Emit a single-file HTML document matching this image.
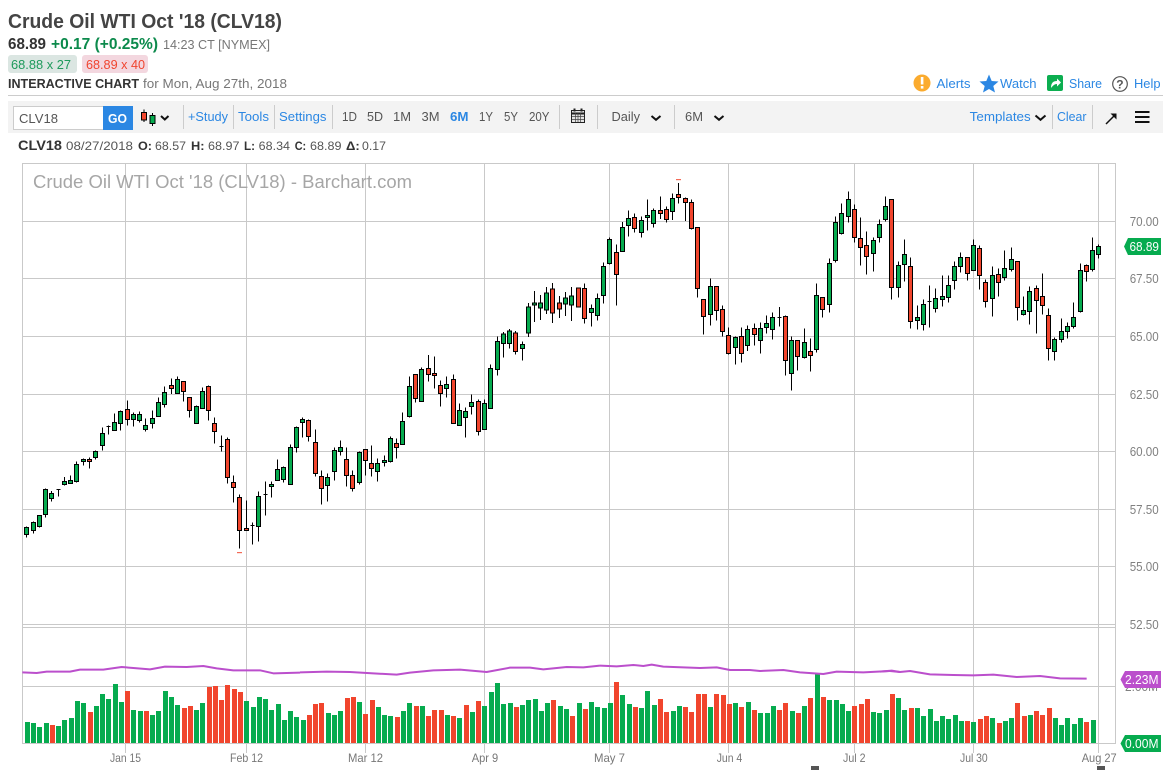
<!DOCTYPE html>
<html><head><meta charset="utf-8"><title>Crude Oil WTI Oct '18 (CLV18)</title>
<style>
html,body{margin:0;padding:0;background:#fff;width:1172px;height:770px;overflow:hidden}
svg{display:block}
text{font-family:"Liberation Sans",sans-serif;font-size:13px;white-space:pre}
.b{font-weight:bold}
.bl{fill:#2b87e3}
.g7{fill:#777}
.d5{fill:#555}
.ax{fill:#808080;font-size:13px}
.dt{fill:#777;font-size:12px}
.w{fill:none;stroke:#000;stroke-width:3}
.gb{fill:#06ab4f;stroke:#000;stroke-width:3}
.rb{fill:#f1452d;stroke:#000;stroke-width:3}
.vg{fill:none;stroke:#06ab4f;stroke-width:15}
.vr{fill:none;stroke:#f1452d;stroke-width:15}
.pl{fill:none;stroke:#bb4fcc;stroke-width:6;stroke-linejoin:round}
</style></head><body>
<svg xmlns="http://www.w3.org/2000/svg" width="1172" height="770" viewBox="0 0 1172 770">
<rect width="1172" height="770" fill="#fff"/>
<!-- Header -->
<text x="8" y="28" class="b" style="font-size:20px" fill="#444" textLength="274" lengthAdjust="spacingAndGlyphs">Crude Oil WTI Oct '18 (CLV18)</text>
<text x="8" y="49" class="b" style="font-size:16px" fill="#333" textLength="38" lengthAdjust="spacingAndGlyphs">68.89</text>
<text x="51" y="49" class="b" style="font-size:16px" fill="#0c8a4c" textLength="107" lengthAdjust="spacingAndGlyphs">+0.17 (+0.25%)</text>
<text x="163" y="49" class="g7" textLength="107" lengthAdjust="spacingAndGlyphs">14:23 CT [NYMEX]</text>
<rect x="8" y="55" width="69" height="18" rx="3" fill="#dbe6e2"/>
<text x="11" y="69" fill="#1f9a5c" textLength="60" lengthAdjust="spacingAndGlyphs">68.88 x 27</text>
<rect x="82" y="55" width="66" height="18" rx="3" fill="#f3d7df"/>
<text x="86" y="69" fill="#f0452f" textLength="59" lengthAdjust="spacingAndGlyphs">68.89 x 40</text>
<text x="8" y="88" class="b" fill="#333" textLength="131" lengthAdjust="spacingAndGlyphs">INTERACTIVE CHART</text>
<text x="143" y="88" class="g7" textLength="144" lengthAdjust="spacingAndGlyphs">for Mon, Aug 27th, 2018</text>
<!-- Top right actions -->
<circle cx="922" cy="83" r="8.5" fill="#fbab2e"/><rect x="920.8" y="77" width="2.6" height="7.5" fill="#fff"/><rect x="920.8" y="86" width="2.6" height="2.6" fill="#fff"/>
<text x="936.5" y="88" class="bl" textLength="34" lengthAdjust="spacingAndGlyphs">Alerts</text>
<path d="M989 74.500L991.700 81L998.500 81.500L993.300 86L995 92.500L989 89L983 92.500L984.700 86L979.500 81.500L986.300 81z" fill="#2b87e3"/>
<text x="1000" y="88" class="bl" textLength="36.500" lengthAdjust="spacingAndGlyphs">Watch</text>
<rect x="1047" y="75" width="16" height="16" rx="2" fill="#0cae50"/>
<path d="M1051 88C1051 83 1053 81 1057 81V78.500L1061 82.500L1057 86.500V84C1054.500 84 1053 85.500 1051 88z" fill="#fff"/>
<text x="1069" y="88" class="bl" textLength="33" lengthAdjust="spacingAndGlyphs">Share</text>
<circle cx="1120" cy="84" r="7.300" fill="none" stroke="#555" stroke-width="1.200"/>
<text x="1116.300" y="88.500" class="b" fill="#555" style="font-size:12px">?</text>
<text x="1134" y="88" class="bl" textLength="26.500" lengthAdjust="spacingAndGlyphs">Help</text>
<rect x="8" y="95" width="1155" height="1" fill="#ccc"/>
<!-- Toolbar -->
<rect x="8" y="101" width="1155" height="32" fill="#f3f3f3"/>
<rect x="13.500" y="106.500" width="90" height="23" fill="#fff" stroke="#ccc"/>
<text x="19" y="123" class="d5" textLength="39" lengthAdjust="spacingAndGlyphs">CLV18</text>
<rect x="103" y="106" width="30" height="24" fill="#2b87e3"/>
<text x="108" y="123" class="b" fill="#fff" textLength="19" lengthAdjust="spacingAndGlyphs">GO</text>
<path d="M144 109.500V122M152.500 113V126" stroke="#000" fill="none"/>
<rect x="141.500" y="112.500" width="5" height="7.500" fill="#f1452d" stroke="#000"/>
<rect x="150" y="115.500" width="5" height="8" fill="#06ab4f" stroke="#000"/>
<path id="ch" d="M161 116L164.800 119.500L168.500 116" fill="none" stroke="#111" stroke-width="2"/>
<g fill="#ccc"><rect x="183" y="105" width="1" height="24"/><rect x="233" y="105" width="1" height="24"/><rect x="274" y="105" width="1" height="24"/><rect x="332" y="105" width="1" height="24"/><rect x="559" y="105" width="1" height="24"/><rect x="597" y="105" width="1" height="24"/><rect x="674" y="105" width="1" height="24"/><rect x="1052" y="105" width="1" height="24"/><rect x="1092" y="105" width="1" height="24"/></g>
<text x="188" y="121" class="bl" textLength="40" lengthAdjust="spacingAndGlyphs">+Study</text>
<text x="238" y="121" class="bl" textLength="31" lengthAdjust="spacingAndGlyphs">Tools</text>
<text x="279" y="121" class="bl" textLength="47.500" lengthAdjust="spacingAndGlyphs">Settings</text>
<text x="342" y="121" class="d5" textLength="15" lengthAdjust="spacingAndGlyphs">1D</text>
<text x="367" y="121" class="d5" textLength="16" lengthAdjust="spacingAndGlyphs">5D</text>
<text x="393" y="121" class="d5" textLength="18" lengthAdjust="spacingAndGlyphs">1M</text>
<text x="421.500" y="121" class="d5" textLength="18" lengthAdjust="spacingAndGlyphs">3M</text>
<text x="450" y="121" class="b bl" textLength="18.500" lengthAdjust="spacingAndGlyphs">6M</text>
<text x="479" y="121" class="d5" textLength="14" lengthAdjust="spacingAndGlyphs">1Y</text>
<text x="504" y="121" class="d5" textLength="14" lengthAdjust="spacingAndGlyphs">5Y</text>
<text x="529" y="121" class="d5" textLength="20.500" lengthAdjust="spacingAndGlyphs">20Y</text>
<!-- Calendar -->
<rect x="571.500" y="110.500" width="13" height="12" fill="#e4e4e4" stroke="#222"/>
<path d="M572 113.500H584" stroke="#222" stroke-width="2" fill="none"/>
<path d="M575.500 113V122M578 113V122M580.500 113V122M572 116.500H584M572 119.500H584" stroke="#444" stroke-width=".7" fill="none"/>
<path d="M574.500 108.500V111.500M581.500 108.500V111.500" stroke="#222" stroke-width="2" fill="none"/>
<text x="611.500" y="121" class="d5" textLength="28.500" lengthAdjust="spacingAndGlyphs">Daily</text>
<path d="M651.500 116L656 119.800L660.500 116" fill="none" stroke="#111" stroke-width="2"/>
<text x="685" y="121" class="d5" textLength="18" lengthAdjust="spacingAndGlyphs">6M</text>
<path d="M714.500 116L719 119.800L723.500 116" fill="none" stroke="#111" stroke-width="2"/>
<text x="969.700" y="121" class="bl" textLength="61" lengthAdjust="spacingAndGlyphs">Templates</text>
<path d="M1035.500 115.500L1040.500 119.800L1045.500 115.500" fill="none" stroke="#111" stroke-width="2"/>
<text x="1057" y="121" class="bl" textLength="29.500" lengthAdjust="spacingAndGlyphs">Clear</text>
<path d="M1106 124L1115 115" fill="none" stroke="#111" stroke-width="1.500"/><path d="M1110.500 113.500H1116.500V119.500z" fill="#111"/>
<rect x="1135" y="111" width="14.500" height="2" fill="#111"/><rect x="1135" y="116" width="14.500" height="2" fill="#111"/><rect x="1135" y="121" width="14.500" height="2" fill="#111"/>
<!-- Quote row -->
<text x="18" y="150" class="b" fill="#333" style="font-size:14px" textLength="44" lengthAdjust="spacingAndGlyphs">CLV18</text>
<text x="66" y="150" class="d5" style="font-size:12px" textLength="67" lengthAdjust="spacingAndGlyphs">08/27/2018</text>
<g style="font-size:12px" fill="#333">
<text x="138" y="150" class="b" style="font-size:12px" textLength="14" lengthAdjust="spacingAndGlyphs">O:</text>
<text x="155" y="150" style="font-size:12px" fill="#555" textLength="31" lengthAdjust="spacingAndGlyphs">68.57</text>
<text x="191" y="150" class="b" style="font-size:12px" textLength="13.500" lengthAdjust="spacingAndGlyphs">H:</text>
<text x="208" y="150" style="font-size:12px" fill="#555" textLength="31.500" lengthAdjust="spacingAndGlyphs">68.97</text>
<text x="244" y="150" class="b" style="font-size:12px" textLength="11" lengthAdjust="spacingAndGlyphs">L:</text>
<text x="258.700" y="150" style="font-size:12px" fill="#555" textLength="31.300" lengthAdjust="spacingAndGlyphs">68.34</text>
<text x="294.700" y="150" class="b" style="font-size:12px" textLength="11.500" lengthAdjust="spacingAndGlyphs">C:</text>
<text x="310" y="150" style="font-size:12px" fill="#555" textLength="31.500" lengthAdjust="spacingAndGlyphs">68.89</text>
<text x="346" y="150" class="b" style="font-size:12px" textLength="13.700" lengthAdjust="spacingAndGlyphs">Δ:</text>
<text x="362" y="150" style="font-size:12px" fill="#555" textLength="24" lengthAdjust="spacingAndGlyphs">0.17</text>
</g>
<!-- Grid -->
<g shape-rendering="crispEdges" fill="#c9c9c9">
<rect x="22" y="163" width="1094" height="1"/>
<rect x="22" y="221" width="1094" height="1"/><rect x="22" y="278" width="1094" height="1"/><rect x="22" y="336" width="1094" height="1"/><rect x="22" y="394" width="1094" height="1"/><rect x="22" y="451" width="1094" height="1"/><rect x="22" y="509" width="1094" height="1"/><rect x="22" y="566" width="1094" height="1"/><rect x="22" y="624" width="1094" height="1"/><rect x="22" y="627" width="1094" height="1"/><rect x="22" y="686" width="1094" height="1"/><rect x="22" y="743" width="1094" height="1"/>
<rect x="22" y="163" width="1" height="581"/><rect x="1115" y="163" width="1" height="581"/>
<rect x="125" y="163" width="1" height="590"/><rect x="246" y="163" width="1" height="590"/><rect x="365" y="163" width="1" height="590"/><rect x="484" y="163" width="1" height="590"/><rect x="609" y="163" width="1" height="590"/><rect x="728" y="163" width="1" height="590"/><rect x="854" y="163" width="1" height="590"/><rect x="973" y="163" width="1" height="590"/><rect x="1098" y="163" width="1" height="590"/>
</g>
<text x="33" y="188" fill="#a6a6a6" style="font-size:18px" textLength="379" lengthAdjust="spacingAndGlyphs">Crude Oil WTI Oct '18 (CLV18) - Barchart.com</text>
<!-- Axis labels -->
<text x="1129.700" y="226" class="ax" textLength="29" lengthAdjust="spacingAndGlyphs">70.00</text>
<text x="1129.700" y="283" class="ax" textLength="29" lengthAdjust="spacingAndGlyphs">67.50</text>
<text x="1129.700" y="341" class="ax" textLength="29" lengthAdjust="spacingAndGlyphs">65.00</text>
<text x="1129.700" y="399" class="ax" textLength="29" lengthAdjust="spacingAndGlyphs">62.50</text>
<text x="1129.700" y="456" class="ax" textLength="29" lengthAdjust="spacingAndGlyphs">60.00</text>
<text x="1129.700" y="514" class="ax" textLength="29" lengthAdjust="spacingAndGlyphs">57.50</text>
<text x="1129.700" y="571" class="ax" textLength="29" lengthAdjust="spacingAndGlyphs">55.00</text>
<text x="1129.700" y="629" class="ax" textLength="29" lengthAdjust="spacingAndGlyphs">52.50</text>
<text x="1125" y="691" class="ax" textLength="33" lengthAdjust="spacingAndGlyphs">2.00M</text>
<path d="M1124 246.500L1128 238H1161V255H1128z" fill="#06ab4f"/>
<text x="1129.500" y="251" fill="#fff" textLength="29.500" lengthAdjust="spacingAndGlyphs">68.89</text>
<path d="M1120.500 679.500L1125 671H1161V688H1125z" fill="#bb4fcc"/>
<text x="1125" y="684" fill="#fff" textLength="33.500" lengthAdjust="spacingAndGlyphs">2.23M</text>
<path d="M1120.500 743.500L1125 735H1161V752H1125z" fill="#06ab4f"/>
<text x="1125" y="748" fill="#fff" textLength="33.500" lengthAdjust="spacingAndGlyphs">0.00M</text>
<text x="110" y="762" class="dt" textLength="31" lengthAdjust="spacingAndGlyphs">Jan 15</text>
<text x="230" y="762" class="dt" textLength="33" lengthAdjust="spacingAndGlyphs">Feb 12</text>
<text x="348" y="762" class="dt" textLength="35" lengthAdjust="spacingAndGlyphs">Mar 12</text>
<text x="471.700" y="762" class="dt" textLength="26.500" lengthAdjust="spacingAndGlyphs">Apr 9</text>
<text x="594" y="762" class="dt" textLength="31" lengthAdjust="spacingAndGlyphs">May 7</text>
<text x="716.700" y="762" class="dt" textLength="25.500" lengthAdjust="spacingAndGlyphs">Jun 4</text>
<text x="843" y="762" class="dt" textLength="22.500" lengthAdjust="spacingAndGlyphs">Jul 2</text>
<text x="960" y="762" class="dt" textLength="27.700" lengthAdjust="spacingAndGlyphs">Jul 30</text>
<text x="1081.700" y="762" class="dt" textLength="35" lengthAdjust="spacingAndGlyphs">Aug 27</text>
<rect x="811" y="766" width="8" height="4" fill="#555"/><rect x="1097" y="766" width="8" height="4" fill="#555"/>
<!-- Candles -->
<g shape-rendering="crispEdges">
<g transform="translate(0,360) scale(.33333)">
<path class="w" d="M79 500V533M100 484V521M118 465V503M136 385V473M154 393V425M175 388V410M193 351V377M211 346V372M229 304V368M250 295V317M268 292V326M286 271V299M307 202V272M325 196V224M343 160V211M361 151V212M382 121V197M400 157V200M418 154V188M436 175V215M457 151V206M475 112V169M493 79V143M514 55V102M532 49V100M550 64V125M568 112V173M589 136V190M607 82V145M625 76V182M643 172V251M664 226V275M682 232V371M700 346V428M718 403V566M739 421V511M757 487V554M775 394V545M796 364V467M814 364V413M832 298V361M850 319V368M871 253V373M889 199V278M169 389H181M319 200H331M658 260H670M751 497H763M790 404H802"/>
<path class="gb" d="M73 503H85V523H73zM94 488H106V511H94zM112 467H124V499H112zM130 388H142V463H130zM148 400H160V415H148zM187 364H199V373H187zM205 361H217V370H205zM223 313H235V364H223zM244 298H256V304H244zM280 274H292V292H280zM301 220H313V256H301zM337 187H349V211H337zM355 154H367V190H355zM394 163H406V178H394zM412 163H424V181H412zM430 196H442V208H430zM451 175H463V190H451zM469 127H481V169H469zM487 97H499V133H487zM526 58H538V100H526zM583 139H595V190H583zM601 94H613V145H601zM769 409H781V499H769zM808 373H820V379H808zM826 328H838V361H826zM844 322H856V358H844zM865 262H877V373H865zM883 202H895V262H883z"/>
<path class="rb" d="M262 298H274V304H262zM376 148H388V178H376zM508 76H520V85H508zM544 64H556V94H544zM562 112H574V151H562zM619 79H631V151H619zM637 190H649V214H637zM676 238H688V352H676zM694 367H706V382H694zM712 412H724V511H712zM733 505H745V511H733z"/>
</g>
<g transform="translate(300,340) scale(.33333)">
<path class="w" d="M7 232V293M25 238V305M46 268V410M64 391V494M82 400V485M103 322V422M121 301V347M139 322V440M157 391V455M178 334V434M196 328V407M214 316V410M232 355V425M253 346V380M271 289V368M289 295V356M307 217V313M328 109V232M346 103V188M364 82V184M385 45V125M403 49V146M421 121V200M439 109V173M460 103V250M478 190V256M496 202V293M514 163V224M535 178V287M553 178V268M571 73V205M592 -10V107M610 -24V53M628 -33V26M646 -27V44M667 4V62"/>
<path class="gb" d="M1 238H13V247H1zM76 412H88V436H76zM97 331H109V394H97zM115 322H127V334H115zM172 337H184V427H172zM226 370H238V394H226zM247 361H259V367H247zM265 295H277V364H265zM301 244H313V313H301zM322 139H334V229H322zM358 88H370V184H358zM433 133H445V145H433zM472 211H484V256H472zM490 214H502V232H490zM508 187H520V199H508zM547 190H559V268H547zM565 85H577V205H565zM586 4H598V88H586zM604 -18H616V10H604zM622 -27H634V10H622zM661 13H673V25H661z"/>
<path class="rb" d="M19 241H31V289H19zM40 307H52V400H40zM58 409H70V445H58zM133 358H145V406H133zM151 406H163V445H151zM190 328H202V361H190zM208 370H220V385H208zM283 310H295V322H283zM340 103H352V175H340zM379 85H391V103H379zM397 100H409V106H397zM415 136H427V160H415zM454 118H466V250H454zM529 184H541V274H529zM640 -21H652V34H640z"/>
</g>
<g transform="translate(520,260) scale(.33333)">
<path class="w" d="M25 129V231M43 93V186M61 105V180M79 81V162M97 69V189M118 108V174M136 96V168M154 81V183M175 84V141"/>
<path class="gb" d="M19 141H31V219H19zM37 129H49V135H37zM55 129H67V144H55zM73 99H85V150H73zM130 114H142V132H130zM148 108H160V135H148z"/>
<path class="rb" d="M91 87H103V159H91zM112 129H124V147H112zM169 84H181V141H169z"/>
</g>
<g transform="translate(580,170) scale(.33333)">
<path class="w" d="M13 340V461M34 403V470M52 370V452M70 277V401M88 202V284M109 223V407M127 156V244M145 121V200M163 130V188M184 139V203M202 88V182M220 115V173M241 79V147M259 109V158M277 70V150M295 39V101M316 82V153M334 88V178M352 172V383M370 388V494M391 325V467M409 349V452M427 406V500M445 472V553M466 499V584M484 472V578M502 466V543M523 460V527M541 457V551M559 436V490M577 427V509M598 411V470M616 436V617M634 499V662M652 511V602M673 475V566M691 505V605M709 340V547M727 382V443M748 265V428M766 139V277M784 100V193M805 64V157M823 103V217M841 142V287M859 184V314M880 202V305M898 148V217M592 443H604"/>
<path class="gb" d="M28 415H40V427H28zM46 385H58V436H46zM64 289H76V376H64zM82 208H94V281H82zM121 172H133V244H121zM139 145H151V166H139zM178 151H190V187H178zM196 136H208V142H196zM214 121H226V160H214zM271 85H283V124H271zM385 349H397V433H385zM460 502H472V532H460zM496 478H508V526H496zM535 475H547V511H535zM553 460H565V473H553zM571 442H583V478H571zM628 511H640V610H628zM667 517H679V562H667zM703 376H715V538H703zM742 280H754V403H742zM760 157H772V271H760zM778 130H790V190H778zM799 88H811V139H799zM874 211H886V250H874zM892 163H904V202H892z"/>
<path class="rb" d="M7 355H19V445H7zM103 247H115V313H103zM157 142H169V175H157zM235 121H247V130H235zM253 118H265V148H253zM289 73H301V82H289zM310 85H322V97H310zM328 97H340V175H328zM346 172H358V355H346zM364 388H376V439H364zM403 349H415V421H403zM421 418H433V484H421zM439 496H451V550H439zM478 499H490V550H478zM517 475H529V493H517zM610 439H622V571H610zM646 511H658V559H646zM685 544H697V556H685zM721 382H733V418H721zM817 118H829V202H817zM835 205H847V232H835zM853 226H865V259H853z"/>
</g>
<g transform="translate(872,170) scale(.33333)">
<path class="w" d="M40 79V154M58 88V388M79 274V382M97 208V334M115 262V475M136 406V478M154 388V481M172 346V473M190 355V427M211 316V409M229 316V398M247 274V358M265 247V308M286 262V332M304 208V301M322 226V358M340 328V412M361 289V440M379 295V379M397 241V331M418 232V304M436 274V451M454 379V436M472 349V463M493 346V490M511 310V434M529 415V571M547 502V571M568 445V517M586 457V505M604 397V475M625 280V427M643 283V334M661 202V304M679 223V265M166 395H178"/>
<path class="gb" d="M34 109H46V149H34zM73 286H85V352H73zM91 253H103V283H91zM130 442H142V451H130zM148 403H160V463H148zM184 385H196V415H184zM205 379H217V388H205zM223 346H235V382H223zM241 289H253V331H241zM259 262H271V289H259zM298 226H310V301H298zM355 316H367V385H355zM391 295H403V322H391zM412 268H424V298H412zM448 421H460V433H448zM466 364H478V424H466zM541 508H553V544H541zM562 484H574V508H562zM580 469H592V484H580zM598 442H610V469H598zM619 301H631V425H619zM655 241H667V298H655zM673 229H685V253H673z"/>
<path class="rb" d="M52 88H64V352H52zM109 289H121V454H109zM280 262H292V310H280zM316 235H328V316H316zM334 337H346V394H334zM373 313H385V337H373zM430 274H442V412H430zM487 355H499V391H487zM505 379H517V406H505zM523 436H535V535H523zM637 286H649V304H637z"/>
</g>
</g>
<rect x="237" y="552" width="5" height="1.200" fill="#f1452d" opacity=".8"/><rect x="676" y="179" width="5" height="1.200" fill="#f1452d" opacity=".8"/>
<!-- Volume -->
<g shape-rendering="crispEdges">
<g transform="translate(0,620) scale(.33333)">
<path class="vg" d="M82 369V306M100 369V309M118 369V321M139 369V309M175 369V318M193 369V300M214 369V294M232 369V243M250 369V249M289 369V258M307 369V222M325 369V237M346 369V192M364 369V246M400 369V270M421 369V273M457 369V285M475 369V273M496 369V213M514 369V231M532 369V255M589 369V270M607 369V249M739 369V243M760 369V261M778 369V231M796 369V237M814 369V270M835 369V252M853 369V300M871 369V273M889 369V291"/>
<path class="vr" d="M157 369V315M271 369V276M382 369V213M439 369V273M553 369V264M571 369V258M628 369V201M646 369V198M664 369V240M682 369V195M703 369V207M721 369V216"/>
</g>
<g transform="translate(300,620) scale(.33333)">
<path class="vg" d="M10 369V300M85 369V279M103 369V285M121 369V273M178 369V246M235 369V261M253 369V285M271 369V288M310 369V273M328 369V249M367 369V258M442 369V285M478 369V294M517 369V276M553 369V258M574 369V216M592 369V189M610 369V252M631 369V249M667 369V255M685 369V240M706 369V237M724 369V273M742 369V249M781 369V258M799 369V267M838 369V249M874 369V246M892 369V261"/>
<path class="vr" d="M28 369V285M46 369V252M64 369V249M142 369V234M160 369V231M196 369V282M217 369V240M292 369V291M349 369V258M385 369V288M403 369V270M424 369V270M460 369V288M499 369V255M535 369V243M649 369V261M760 369V240M817 369V288M856 369V267"/>
</g>
<g transform="translate(600,620) scale(.33333)">
<path class="vg" d="M13 369V264M31 369V249M67 369V225M88 369V252M124 369V264M142 369V213M163 369V255M220 369V273M238 369V258M331 369V261M406 369V249M445 369V246M481 369V279M502 369V279M520 369V258M577 369V273M613 369V258M652 369V162M688 369V240M709 369V240M727 369V252M745 369V273M820 369V276M838 369V279M859 369V270M895 369V234"/>
<path class="vr" d="M49 369V186M106 369V261M181 369V237M199 369V276M256 369V261M274 369V276M295 369V222M313 369V222M349 369V222M370 369V225M388 369V252M424 369V261M463 369V270M538 369V270M556 369V249M595 369V279M631 369V234M670 369V231M763 369V258M784 369V252M802 369V237M877 369V222"/>
</g>
<g transform="translate(880,620) scale(.33333)">
<path class="vg" d="M73 369V270M112 369V264M130 369V288M151 369V267M169 369V303M187 369V288M205 369V297M226 369V285M244 369V303M280 369V306M337 369V294M376 369V303M394 369V294M451 369V285M526 369V294M544 369V315M562 369V294M583 369V312M601 369V294M640 369V300"/>
<path class="vr" d="M94 369V264M262 369V303M301 369V297M319 369V288M358 369V309M412 369V249M433 369V288M469 369V273M487 369V285M508 369V264M619 369V306"/>
</g>
</g>
<!-- Volume average -->
<g>
<g transform="translate(0,620) scale(.33333)"><path class="pl" d="M67 157L110 159L140 155L210 155L240 149L310 149L365 141L400 144L450 148L495 140L560 141L610 138L650 145L700 151L780 151L820 160L900 158"/></g>
<g transform="translate(300,620) scale(.33333)"><path class="pl" d="M0 157L80 155L150 156L220 160L290 164L330 158L400 151L480 149L560 156L630 143L690 143L730 148L800 141L850 142L900 137"/></g>
<g transform="translate(600,620) scale(.33333)"><path class="pl" d="M0 137L50 139L100 135L130 138L155 134L190 140L250 142L300 144L350 142L390 150L450 150L480 153L550 150L600 157L670 162L710 155L790 157L870 153L900 156"/></g>
<g transform="translate(880,620) scale(.33333)"><path class="pl" d="M0 155L35 152L60 156L90 153L150 163L220 165L280 166L340 164L410 171L480 168L540 175L620 176"/></g>
</g>
</svg>
</body></html>
